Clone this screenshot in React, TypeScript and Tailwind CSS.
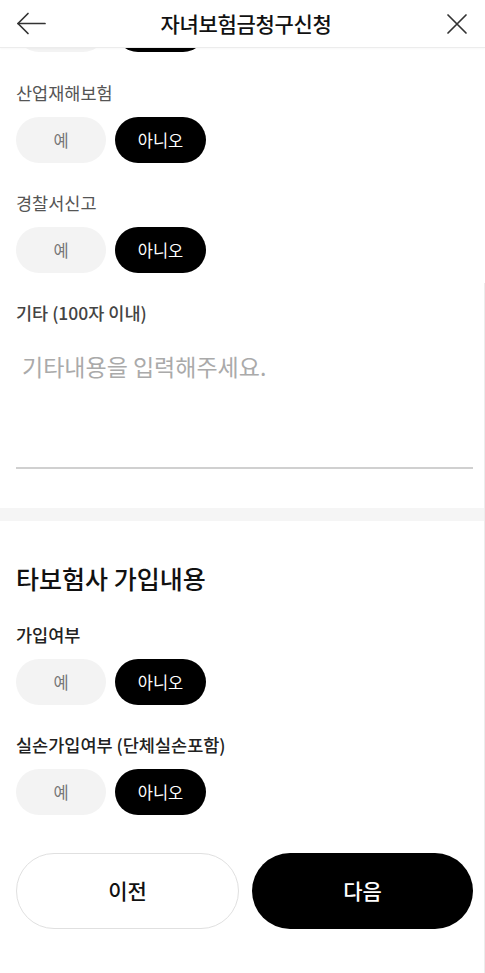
import React from 'react';

const FONT = { fontFamily: '"Noto Sans CJK KR", "Noto Sans", sans-serif' };

function YesNo({ value = 'no', blank }: { value?: 'yes' | 'no'; blank?: boolean }) {
  return (
    <div className="flex gap-[9px]">
      <button
        className={`w-[90px] h-[46px] rounded-full text-[16.5px] ${
          value === 'yes' ? 'bg-black text-white' : 'bg-[#f3f3f3] text-[#777]'
        }`}
      >
        {blank ? null : '예'}
      </button>
      <button
        className={`w-[91px] h-[46px] rounded-full text-[16.5px] ${
          value === 'no' ? 'bg-black text-white' : 'bg-[#f3f3f3] text-[#777]'
        }`}
      >
        {blank ? null : '아니오'}
      </button>
    </div>
  );
}

function Field({ label, dark }: { label: string; dark?: boolean }) {
  return (
    <div className="mb-[28px]">
      <p
        className={`text-[17.5px] leading-[24px] mb-[12px] ${
          dark ? 'font-medium text-[#222]' : 'text-[#555]'
        }`}
      >
        {label}
      </p>
      <YesNo />
    </div>
  );
}

export default function App() {
  return (
    <div className="relative w-[485px] h-[973px] bg-white overflow-hidden" style={FONT}>
      {/* header */}
      <header className="relative z-10 h-[48px] flex items-center justify-between pl-[16px] pr-[17px] bg-white border-b border-[#ececec] shadow-[0_1px_2px_rgba(0,0,0,0.03)]">
        <svg width="30" height="24" viewBox="0 0 30 24" fill="none" stroke="#333" strokeWidth="1.7" strokeLinecap="round" strokeLinejoin="round">
          <path d="M29 11.5H2" />
          <path d="M12 1.5L2 11.5l10 10" />
        </svg>
        <h1 className="text-[21px] font-medium text-[#111] tracking-[-0.3px]">자녀보험금청구신청</h1>
        <svg width="22" height="22" viewBox="0 0 22 22" fill="none" stroke="#333" strokeWidth="1.7" strokeLinecap="round">
          <path d="M2 2l18 18M20 2L2 20" />
        </svg>
      </header>

      {/* scrolled content */}
      <div className="pl-[16px] pr-[12px]">
        <div className="h-[4px] overflow-hidden">
          <div className="-mt-[42px]">
            <YesNo blank />
          </div>
        </div>
        <div className="pt-[29px]">
          <Field label="산업재해보험" />
          <Field label="경찰서신고" />
          <p className="text-[17.5px] leading-[24px] font-medium text-[#444]">기타 (100자 이내)</p>
          <div className="mt-[18px] h-[126px] border-b-2 border-[#d0d0d0] px-[6px] pt-[6px]">
            <p className="text-[23px] text-[#aaa]">기타내용을 입력해주세요.</p>
          </div>
        </div>
      </div>

      <div className="mt-[39px] h-[13px] bg-[#f5f5f5]" />

      <div className="pl-[16px] pr-[12px] pt-[40px]">
        <h2 className="text-[25px] leading-[34px] font-medium text-[#111] mb-[28px]">타보험사 가입내용</h2>
        <Field label="가입여부" dark />
        <Field label="실손가입여부 (단체실손포함)" dark />
        <div className="flex gap-[13px] pt-[10px]">
          <button className="flex-1 h-[76px] rounded-full border border-[#e0e0e0] bg-white text-[21px] font-medium text-[#111]">
            이전
          </button>
          <button className="flex-1 h-[76px] rounded-full bg-black text-[21px] font-medium text-white">
            다음
          </button>
        </div>
      </div>

      {/* scrollbar track */}
      <div className="absolute right-0 top-[283px] bottom-0 w-px bg-[#ececec]" />
    </div>
  );
}
